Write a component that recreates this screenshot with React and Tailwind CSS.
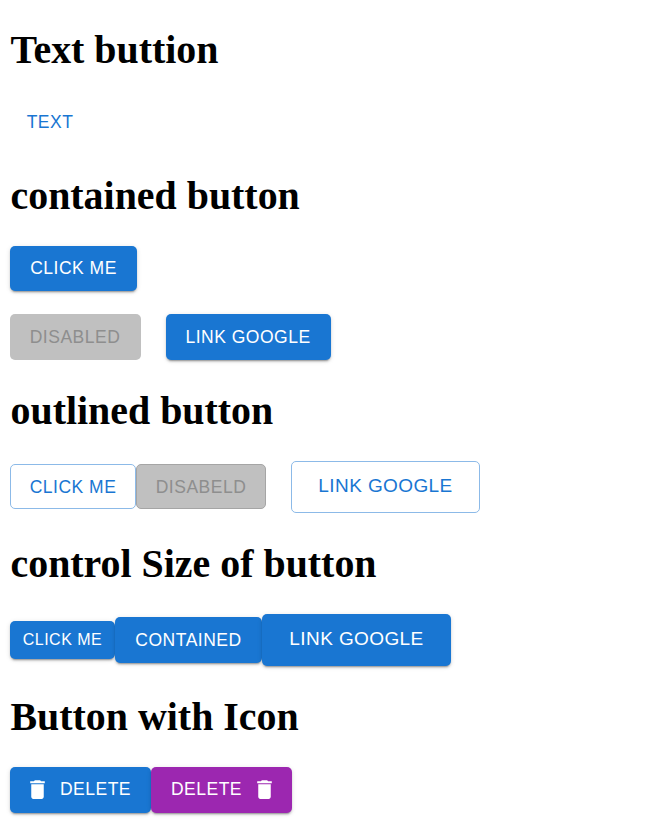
const shadow = "shadow-[0_3px_1px_-2px_rgba(0,0,0,0.2),0_2px_2px_0_rgba(0,0,0,0.14),0_1px_5px_0_rgba(0,0,0,0.12)]";
const base = "flex items-center justify-center rounded-[5px] font-['Liberation_Sans',Arial,sans-serif] whitespace-nowrap uppercase";
const blue = "bg-[#1976d2] text-white " + shadow;

function Heading({ children, className = "" }) {
  return (
    <h1 className={"pl-[0.5px] font-['Liberation_Serif','Times_New_Roman',serif] font-bold text-[39.9px] leading-[46px] text-black whitespace-nowrap " + className}>
      {children}
    </h1>
  );
}

function Button({ className, children }) {
  return <button className={base + " " + className}>{children}</button>;
}

function Trash({ className }) {
  return (
    <svg viewBox="0 0 24 24" fill="currentColor" className={"size-[25px] shrink-0 " + className}>
      <path d="M6 19c0 1.1.9 2 2 2h8c1.1 0 2-.9 2-2V7H6v12zM19 4h-3.5l-1-1h-5l-1 1H5v2h14V4z" />
    </svg>
  );
}

export default function App() {
  return (
    <main className="min-h-[834px] bg-white pl-[10px] pt-[27px]">
      <Heading>Text buttion</Heading>
      <Button className="mt-[26px] h-[46px] w-[80px] text-[17.5px] tracking-[0.5px] text-[#1976d2]">Text</Button>

      <Heading className="mt-[28px]">contained button</Heading>
      <Button className={"mt-[27px] h-[45px] w-[127px] text-[17.5px] tracking-[0.5px] " + blue}>Click me</Button>
      <div className="mt-[23px] flex gap-[25px]">
        <Button className="h-[46px] w-[131px] bg-[#c0c0c0] pr-px text-[17.5px] tracking-[0.5px] text-[#8e8e8e]">Disabled</Button>
        <Button className={"h-[46px] w-[165px] pr-px text-[17.5px] tracking-[0.5px] " + blue}>Link Google</Button>
      </div>

      <Heading className="mt-[28px]">outlined button</Heading>
      <div className="mt-[27px] flex items-start">
        <Button className="mt-[3px] h-[45px] w-[126px] border border-[#8cbae8] pt-[2px] text-[17.5px] tracking-[0.5px] text-[#1976d2]">Click me</Button>
        <Button className="mt-[3px] h-[45px] w-[130px] border border-[#a5a5a5] bg-[#c0c0c0] pt-[2px] text-[17.5px] tracking-[0.5px] text-[#8e8e8e]">Disabeld</Button>
        <Button className="ml-[25px] h-[52px] w-[189px] border border-[#8cbae8] pb-px text-[19px] tracking-[0.4px] text-[#1976d2]">Link Google</Button>
      </div>

      <Heading className="mt-[28px]">control Size of button</Heading>
      <div className="mt-[27px] flex items-center">
        <Button className={"h-[38px] w-[105px] text-[16px] tracking-[0.5px] " + blue}>Click me</Button>
        <Button className={"h-[46px] w-[147px] text-[17.5px] tracking-[0.5px] " + blue}>Contained</Button>
        <Button className={"h-[52px] w-[189px] pb-[2px] text-[19px] tracking-[0.4px] " + blue}>Link Google</Button>
      </div>

      <Heading className="mt-[28px]">Button with Icon</Heading>
      <div className="mt-[27px] flex">
        <Button className={"h-[46px] w-[141px] pb-[2px] text-[17.5px] tracking-[0.5px] " + blue}>
          <Trash className="mr-[10px] -ml-[5px]" />Delete
        </Button>
        <Button className={"h-[46px] w-[141px] bg-[#9c27b0] pb-[2px] text-[17.5px] tracking-[0.5px] text-white " + shadow}>
          Delete<Trash className="ml-[10px] -mr-[5px]" />
        </Button>
      </div>
    </main>
  );
}
